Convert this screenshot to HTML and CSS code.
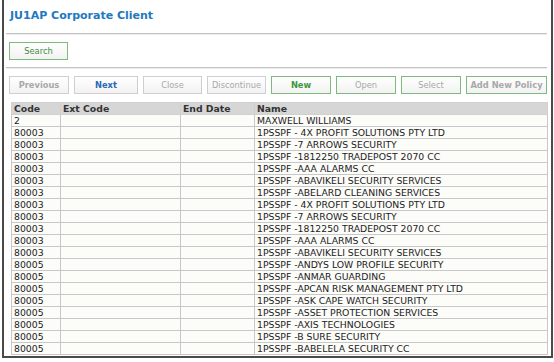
FILE: index.html
```html
<!DOCTYPE html>
<html lang="en">
<head>
    <meta charset="UTF-8">
    <title>JU1AP Corporate Client</title>
    <link rel="stylesheet" href="styles.css">
</head>
<body>
    <div class="frame">
        <h1 class="title">JU1AP Corporate Client</h1>
        <div class="rule"></div>
        <div class="search-bar">
            <button class="btn btn-green">Search</button>
        </div>
        <div class="rule"></div>
        <div class="toolbar">
            <button class="btn btn-grey off bold w-prev">Previous</button>
            <button class="btn btn-grey next w-next">Next</button>
            <button class="btn btn-grey off w-close">Close</button>
            <button class="btn btn-grey off w-disc">Discontinue</button>
            <button class="btn btn-green new w-new">New</button>
            <button class="btn btn-green off w-open">Open</button>
            <button class="btn btn-green off w-select">Select</button>
            <button class="btn btn-green off bold w-policy">Add New Policy</button>
        </div>
        <table class="grid">
            <thead>
                <tr>
                    <th class="c-code">Code</th>
                    <th class="c-ext">Ext Code</th>
                    <th class="c-end">End Date</th>
                    <th>Name</th>
                </tr>
            </thead>
            <tbody>
                <tr><td>2</td><td></td><td></td><td>MAXWELL WILLIAMS</td></tr>
                <tr><td>80003</td><td></td><td></td><td>1PSSPF - 4X PROFIT SOLUTIONS PTY LTD</td></tr>
                <tr><td>80003</td><td></td><td></td><td>1PSSPF -7 ARROWS SECURITY</td></tr>
                <tr><td>80003</td><td></td><td></td><td>1PSSPF -1812250 TRADEPOST 2070 CC</td></tr>
                <tr><td>80003</td><td></td><td></td><td>1PSSPF -AAA ALARMS CC</td></tr>
                <tr><td>80003</td><td></td><td></td><td>1PSSPF -ABAVIKELI SECURITY SERVICES</td></tr>
                <tr><td>80003</td><td></td><td></td><td>1PSSPF -ABELARD CLEANING SERVICES</td></tr>
                <tr><td>80003</td><td></td><td></td><td>1PSSPF - 4X PROFIT SOLUTIONS PTY LTD</td></tr>
                <tr><td>80003</td><td></td><td></td><td>1PSSPF -7 ARROWS SECURITY</td></tr>
                <tr><td>80003</td><td></td><td></td><td>1PSSPF -1812250 TRADEPOST 2070 CC</td></tr>
                <tr><td>80003</td><td></td><td></td><td>1PSSPF -AAA ALARMS CC</td></tr>
                <tr><td>80003</td><td></td><td></td><td>1PSSPF -ABAVIKELI SECURITY SERVICES</td></tr>
                <tr><td>80005</td><td></td><td></td><td>1PSSPF -ANDYS LOW PROFILE SECURITY</td></tr>
                <tr><td>80005</td><td></td><td></td><td>1PSSPF -ANMAR GUARDING</td></tr>
                <tr><td>80005</td><td></td><td></td><td>1PSSPF -APCAN RISK MANAGEMENT PTY LTD</td></tr>
                <tr><td>80005</td><td></td><td></td><td>1PSSPF -ASK CAPE WATCH SECURITY</td></tr>
                <tr><td>80005</td><td></td><td></td><td>1PSSPF -ASSET PROTECTION SERVICES</td></tr>
                <tr><td>80005</td><td></td><td></td><td>1PSSPF -AXIS TECHNOLOGIES</td></tr>
                <tr><td>80005</td><td></td><td></td><td>1PSSPF -B SURE SECURITY</td></tr>
                <tr><td>80005</td><td></td><td></td><td>1PSSPF -BABELELA SECURITY CC</td></tr>
            </tbody>
        </table>
    </div>
</body>
</html>
```

FILE: styles.css
```css
body {
    margin: 0;
    font-family: "DejaVu Sans", Verdana, sans-serif;
    background: #fff;
}
.frame {
    margin-left: 2px;
    width: 547px;
    height: 356px;
    border: 2px solid #4a4a4a;
    border-top: none;
}
.title {
    margin: 0;
    padding: 9px 0 0 6px;
    height: 24px;
    font-size: 11px;
    font-weight: bold;
    color: #2279be;
}
.rule {
    height: 1px;
    margin: 0 4px 0 2px;
    background: #c4c4c4;
    border-bottom: 1px solid #ececec;
}
.search-bar {
    padding: 4px 0 7px 5px;
}
.btn {
    height: 18px;
    padding: 0;
    font-family: "DejaVu Sans", Verdana, sans-serif;
    font-size: 8.3px;
    background: linear-gradient(#ffffff, #f2f2f2);
    border: 1px solid #cfcfcf;
    color: #333;
}
.btn-green {
    border-color: #7dbb7d;
    color: #3d8f3d;
}
.search-bar .btn {
    width: 59px;
}
.toolbar {
    display: flex;
    gap: 5px;
    padding: 7px 0 0 5px;
}
.off {
    color: #a8a8a8;
}
.bold {
    font-weight: bold;
}
.next {
    color: #2a6ab0;
    font-weight: bold;
}
.new {
    color: #3d963d;
    font-weight: bold;
}
.w-prev { width: 60px; }
.w-next { width: 64px; }
.w-close { width: 59px; }
.w-disc { width: 59px; }
.w-new { width: 60px; }
.w-open { width: 60px; }
.w-select { width: 60px; }
.w-policy { width: 81px; }
.grid {
    margin: 8px 0 0 7px;
    width: 537px;
    border-collapse: collapse;
    font-size: 9.3px;
    color: #222;
}
.grid th, .grid td {
    height: 11px;
    padding: 0 0 0 2px;
    border: 1px solid #c8c8c8;
    text-align: left;
    line-height: 11px;
    white-space: nowrap;
}
.grid th {
    background: #d6d6d6;
    border-color: #d0d0d0;
    color: #333;
}
.grid td {
    background: #fcfcf9;
}
.c-code { width: 46px; }
.c-ext { width: 117px; }
.c-end { width: 71px; }
```
